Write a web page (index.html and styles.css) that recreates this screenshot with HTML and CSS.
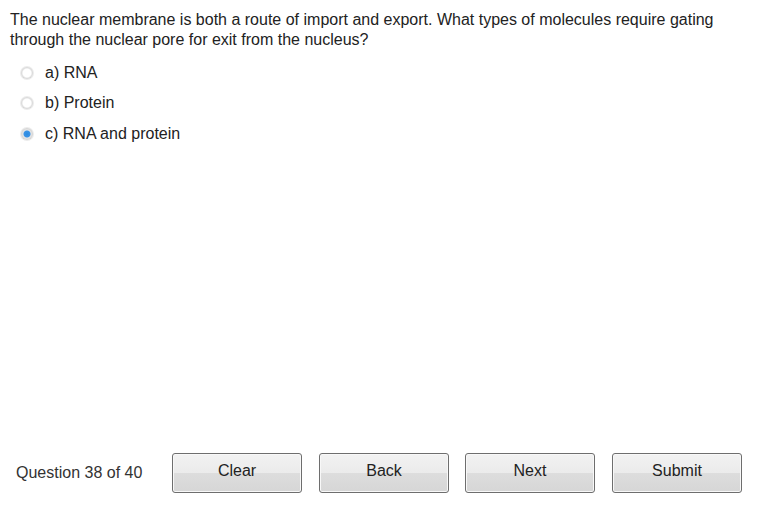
FILE: index.html
```html
<!DOCTYPE html>
<html lang="en">
<head>
<meta charset="UTF-8" />
<title>Quiz</title>
<link rel="stylesheet" href="styles.css">
</head>
<body>
  <div class="quiz">
    <div class="question-section">
      <p class="question">The nuclear membrane is both a route of import and export. What types of molecules require gating through the nuclear pore for exit from the nucleus?</p>
      <div class="options">
        <label class="option"><input type="radio" name="q38" value="a"><span class="radio"></span>a) RNA</label>
        <label class="option"><input type="radio" name="q38" value="b"><span class="radio"></span>b) Protein</label>
        <label class="option"><input type="radio" name="q38" value="c" checked><span class="radio"></span>c) RNA and protein</label>
      </div>
    </div>
    <div class="nav-bar">
      <span class="counter">Question 38 of 40</span>
      <button class="nav-btn">Clear</button>
      <button class="nav-btn">Back</button>
      <button class="nav-btn">Next</button>
      <button class="nav-btn">Submit</button>
    </div>
  </div>
</body>
</html>
```

FILE: styles.css
```css
body {
  margin: 0;
  font-family: "Liberation Sans", Arial, sans-serif;
  color: #222;
  background: #fff;
}
.quiz {
  height: 507px;
  display: flex;
  flex-direction: column;
}
.question-section {
  flex: 1;
  padding: 10px 10px 0 10px;
}
.question {
  margin: 0;
  font-size: 16px;
  line-height: 20px;
  width: 720px;
}
.options {
  display: flex;
  flex-direction: column;
  margin-top: 8px;
  padding-left: 11px;
}
.option {
  display: flex;
  align-items: center;
  height: 30px;
  font-size: 16px;
  cursor: pointer;
}
.option:last-child {
  margin-top: 1px;
}
.option input {
  display: none;
}
.radio {
  width: 12px;
  height: 12px;
  border-radius: 50%;
  background: radial-gradient(circle at 50% 50%, #fff 0, #fff 4px, #e4e4e4 5px, #d0d0d0 6px);
  box-shadow: 0 0 0 1px #ececec;
  margin-right: 12px;
}
.option input:checked + .radio {
  background: radial-gradient(circle at 50% 50%, #2a8be0 0, #3b93e6 3px, #e8e8e8 4px, #d0d0d0 6px);
}
.nav-bar {
  display: flex;
  align-items: center;
  padding: 0 0 14px 16px;
}
.counter {
  font-size: 16px;
  color: #333;
  width: 156px;
}
.nav-btn {
  width: 130px;
  height: 40px;
  margin-right: 17px;
  border: 1px solid #6e6e6e;
  border-radius: 3px;
  background: linear-gradient(to bottom, #f2f2f2 0%, #ebebeb 50%, #dddddd 51%, #d6d6d6 100%);
  box-shadow: inset 0 0 0 1px #f8f8f8;
  font-family: "Liberation Sans", Arial, sans-serif;
  font-size: 16px;
  color: #222;
  padding: 0 0 5px 0;
  cursor: pointer;
}
.nav-btn:nth-of-type(2) {
  margin-right: 16px;
}
```
